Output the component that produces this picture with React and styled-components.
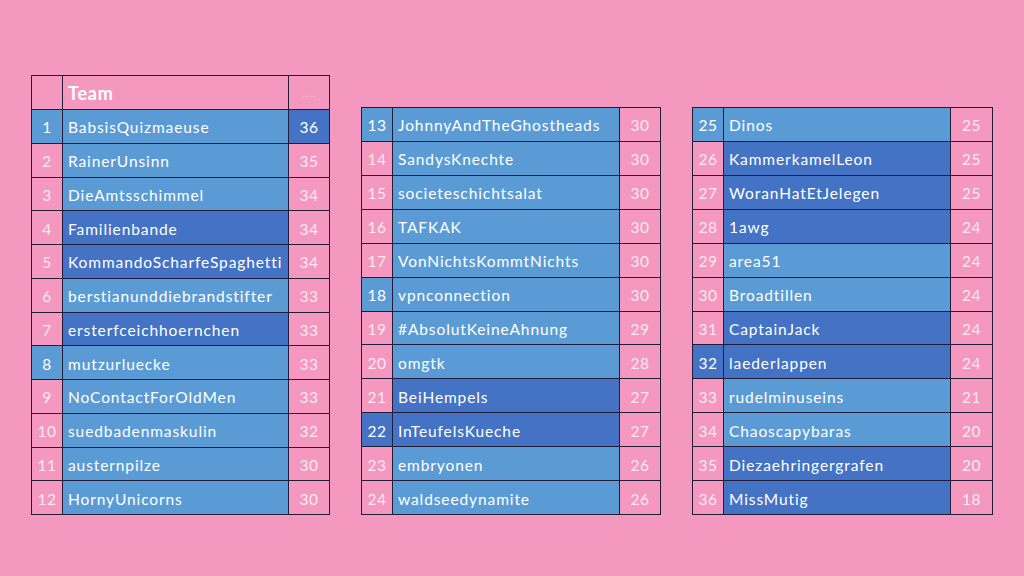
import React from "react";
import styled, { createGlobalStyle } from "styled-components";

const PINK = "#f498bf";
const LIGHT = "#5b9bd5";
const DARK = "#4472c4";
const LINE = "#221c36";

const GlobalStyle = createGlobalStyle`
  html, body {
    margin: 0;
    padding: 0;
    background: ${PINK};
  }
  body {
    font-family: Lato, "Noto Sans", sans-serif;
  }
`;

const Page = styled.div`
  width: 1024px;
  height: 576px;
  box-sizing: border-box;
  padding: 75px 0 0 31px;
  display: flex;
  align-items: flex-start;
  gap: 31px;
  background: ${PINK};
`;

const Board = styled.div`
  display: grid;
  grid-template-columns: ${(p) => p.$cols};
  grid-template-rows: ${(p) => (p.$header ? "34px " : "")}repeat(12, 1fr);
  margin-top: ${(p) => (p.$header ? 0 : 32)}px;
  height: ${(p) => p.$height}px;
  border-top: 1px solid ${LINE};
  border-left: 1px solid ${LINE};
`;

const fill = { pink: PINK, light: LIGHT, dark: DARK };

const Cell = styled.div`
  display: flex;
  align-items: center;
  justify-content: ${(p) => (p.$left ? "flex-start" : "center")};
  padding: ${(p) => (p.$left ? "2px 0 0 5px" : "2px 0 0")};
  background: ${(p) => fill[p.$tone]};
  color: ${(p) => (p.$tone === "pink" ? "rgba(255,255,255,0.8)" : "#ffffff")};
  border-right: 1px solid ${LINE};
  border-bottom: 1px solid ${LINE};
  font-size: 15.5px;
  letter-spacing: ${(p) => (p.$left ? "0.9px" : "0.4px")};
  white-space: nowrap;
  overflow: hidden;
`;

const HeadCell = styled(Cell)`
  font-weight: 700;
  font-size: 18px;
  color: #ffffff;
  letter-spacing: 0.8px;
  padding-bottom: 2px;
`;

const Dots = styled.span`
  font-size: 10px;
  color: rgba(255, 255, 255, 0.35);
  letter-spacing: 0.5px;
`;

// [rank, team, score, rankTone, teamTone, scoreTone]
const rows = [
  [1, "BabsisQuizmaeuse", 36, "light", "light", "dark"],
  [2, "RainerUnsinn", 35, "pink", "light", "pink"],
  [3, "DieAmtsschimmel", 34, "pink", "light", "pink"],
  [4, "Familienbande", 34, "pink", "dark", "pink"],
  [5, "KommandoScharfeSpaghetti", 34, "pink", "dark", "pink"],
  [6, "berstianunddiebrandstifter", 33, "pink", "light", "pink"],
  [7, "ersterfceichhoernchen", 33, "pink", "dark", "pink"],
  [8, "mutzurluecke", 33, "light", "light", "pink"],
  [9, "NoContactForOldMen", 33, "pink", "light", "pink"],
  [10, "suedbadenmaskulin", 32, "pink", "light", "pink"],
  [11, "austernpilze", 30, "pink", "light", "pink"],
  [12, "HornyUnicorns", 30, "pink", "light", "pink"],
  [13, "JohnnyAndTheGhostheads", 30, "light", "light", "pink"],
  [14, "SandysKnechte", 30, "pink", "light", "pink"],
  [15, "societeschichtsalat", 30, "pink", "light", "pink"],
  [16, "TAFKAK", 30, "pink", "light", "pink"],
  [17, "VonNichtsKommtNichts", 30, "pink", "light", "pink"],
  [18, "vpnconnection", 30, "light", "light", "pink"],
  [19, "#AbsolutKeineAhnung", 29, "pink", "light", "pink"],
  [20, "omgtk", 28, "pink", "light", "pink"],
  [21, "BeiHempels", 27, "pink", "dark", "pink"],
  [22, "InTeufelsKueche", 27, "dark", "dark", "pink"],
  [23, "embryonen", 26, "pink", "light", "pink"],
  [24, "waldseedynamite", 26, "pink", "light", "pink"],
  [25, "Dinos", 25, "light", "light", "pink"],
  [26, "KammerkamelLeon", 25, "pink", "dark", "pink"],
  [27, "WoranHatEtJelegen", 25, "pink", "dark", "pink"],
  [28, "1awg", 24, "pink", "dark", "pink"],
  [29, "area51", 24, "pink", "light", "pink"],
  [30, "Broadtillen", 24, "pink", "light", "pink"],
  [31, "CaptainJack", 24, "pink", "dark", "pink"],
  [32, "laederlappen", 24, "dark", "dark", "pink"],
  [33, "rudelminuseins", 21, "pink", "light", "pink"],
  [34, "Chaoscapybaras", 20, "pink", "light", "pink"],
  [35, "Diezaehringergrafen", 20, "pink", "dark", "pink"],
  [36, "MissMutig", 18, "pink", "dark", "pink"],
];

const boards = [
  { cols: "31px 226px 41px", header: true, height: 439 },
  { cols: "31px 227px 41px", header: false, height: 407 },
  { cols: "31px 227px 42px", header: false, height: 407 },
];

export default function App() {
  return (
    <>
      <GlobalStyle />
      <Page>
        {boards.map((b, i) => (
          <Board key={i} $cols={b.cols} $header={b.header} $height={b.height}>
            {b.header && (
              <>
                <HeadCell $tone="pink" />
                <HeadCell $tone="pink" $left>
                  Team
                </HeadCell>
                <HeadCell $tone="pink">
                  <Dots>.....</Dots>
                </HeadCell>
              </>
            )}
            {rows.slice(i * 12, i * 12 + 12).map(([n, team, score, a, t, s]) => (
              <React.Fragment key={n}>
                <Cell $tone={a}>{n}</Cell>
                <Cell $tone={t} $left>
                  {team}
                </Cell>
                <Cell $tone={s}>{score}</Cell>
              </React.Fragment>
            ))}
          </Board>
        ))}
      </Page>
    </>
  );
}
